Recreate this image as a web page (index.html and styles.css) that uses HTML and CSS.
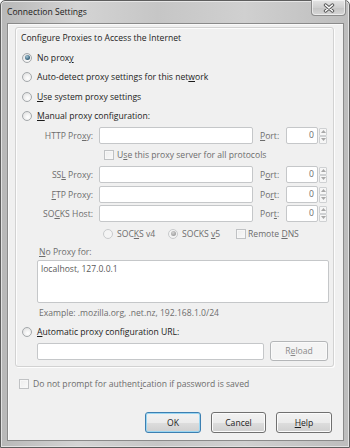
FILE: index.html
```html
<!DOCTYPE html>
<html lang="en">
<head>
<meta charset="utf-8">
<title>Connection Settings</title>
<link rel="stylesheet" href="styles.css">
</head>
<body>
<div class="window">
  <div class="titlebar">
    <span class="title">Connection Settings</span>
    <span class="close"><svg width="12" height="10" viewBox="0 0 12 10"><path d="M2.5 2 L9.5 8 M9.5 2 L2.5 8" stroke="#555" stroke-width="3.4" stroke-linecap="round"/><path d="M2.5 2 L9.5 8 M9.5 2 L2.5 8" stroke="#fff" stroke-width="1.6" stroke-linecap="round"/></svg></span>
  </div>
  <div class="client">
    <div class="group">
      <div class="caption">Configure Proxies to Access the Internet</div>
      <div class="opt h19"><span class="radio checked"></span><span>No prox<u>y</u></span></div>
      <div class="opt h20"><span class="radio"></span><span>Auto-detect proxy settings for this net<u>w</u>ork</span></div>
      <div class="opt h19"><span class="radio"></span><span><u>U</u>se system proxy settings</span></div>
      <div class="opt h19"><span class="radio"></span><span><u>M</u>anual proxy configuration:</span></div>

      <div class="proxy h21">
        <span class="plabel">HTTP Pro<u>x</u>y:</span>
        <span class="field"></span>
        <span class="portlabel"><u>P</u>ort:</span>
        <span class="port">0</span>
        <span class="spin"><span class="sb"><svg width="5" height="3" viewBox="0 0 5 3"><path d="M0 3 L2.5 0 L5 3Z" fill="#a8a8a8"/></svg></span><span class="sb"><svg width="5" height="3" viewBox="0 0 5 3"><path d="M0 0 L2.5 3 L5 0Z" fill="#a8a8a8"/></svg></span></span>
      </div>
      <div class="share h18"><span class="check"></span><span>U<u>s</u>e this proxy server for all protocols</span></div>
      <div class="proxy h21">
        <span class="plabel">SS<u>L</u> Proxy:</span>
        <span class="field"></span>
        <span class="portlabel">P<u>o</u>rt:</span>
        <span class="port">0</span>
        <span class="spin"><span class="sb"><svg width="5" height="3" viewBox="0 0 5 3"><path d="M0 3 L2.5 0 L5 3Z" fill="#a8a8a8"/></svg></span><span class="sb"><svg width="5" height="3" viewBox="0 0 5 3"><path d="M0 0 L2.5 3 L5 0Z" fill="#a8a8a8"/></svg></span></span>
      </div>
      <div class="proxy h19">
        <span class="plabel"><u>F</u>TP Proxy:</span>
        <span class="field"></span>
        <span class="portlabel">Po<u>r</u>t:</span>
        <span class="port">0</span>
        <span class="spin"><span class="sb"><svg width="5" height="3" viewBox="0 0 5 3"><path d="M0 3 L2.5 0 L5 3Z" fill="#a8a8a8"/></svg></span><span class="sb"><svg width="5" height="3" viewBox="0 0 5 3"><path d="M0 0 L2.5 3 L5 0Z" fill="#a8a8a8"/></svg></span></span>
      </div>
      <div class="proxy h19">
        <span class="plabel">SO<u>C</u>KS Host:</span>
        <span class="field"></span>
        <span class="portlabel">Por<u>t</u>:</span>
        <span class="port">0</span>
        <span class="spin"><span class="sb"><svg width="5" height="3" viewBox="0 0 5 3"><path d="M0 3 L2.5 0 L5 3Z" fill="#a8a8a8"/></svg></span><span class="sb"><svg width="5" height="3" viewBox="0 0 5 3"><path d="M0 0 L2.5 3 L5 0Z" fill="#a8a8a8"/></svg></span></span>
      </div>
      <div class="versions h21">
        <span class="ver v4"><span class="radio dis"></span><span>SOC<u>K</u>S v4</span></span>
        <span class="ver v5"><span class="radio dis checked"></span><span>SOCKS <u>v</u>5</span></span>
        <span class="ver dns"><span class="check"></span><span>Remote <u>D</u>NS</span></span>
      </div>
      <div class="noproxy-label h15"><span><u>N</u>o Proxy for:</span></div>
      <div class="noproxy">localhost, 127.0.0.1</div>
      <div class="example h19">Example: .mozilla.org, .net.nz, 192.168.1.0/24</div>
      <div class="opt h19"><span class="radio"></span><span class="dark"><u>A</u>utomatic proxy configuration URL:</span></div>
      <div class="url h20">
        <span class="urlfield"></span>
        <span class="btn reload">R<u>e</u>load</span>
      </div>
    </div>

    <div class="prompt"><span class="check"></span><span>Do not prompt for authent<u>i</u>cation if password is saved</span></div>

    <div class="buttons">
      <span class="btn default">OK</span>
      <span class="btn">Cancel</span>
      <span class="btn"><u>H</u>elp</span>
    </div>
  </div>
</div>
</body>
</html>
```

FILE: styles.css
```css
* { box-sizing: border-box; }
html, body { margin: 0; padding: 0; }
body {
  width: 350px;
  height: 448px;
  overflow: hidden;
  font-family: "Open Sans", "Noto Sans", sans-serif;
  font-size: 8.6px;
  line-height: 12px;
  color: #1c1c1c;
  background: #fff;
}
u { text-decoration: underline; text-underline-offset: 1px; }

.window {
  width: 350px;
  height: 448px;
  display: flex;
  flex-direction: column;
  border: 1px solid #5e5e5e;
  border-radius: 5px 5px 0 0;
  padding: 0 5px 6px 6px;
  background: linear-gradient(to right, #b8b8b8 0%, #d4d4d4 22%, #c6c6c6 45%, #d0d0d0 70%, #bdbdbd 100%);
  box-shadow: inset 1px 0 0 #e2e2e2, inset -1px 0 0 #e2e2e2, inset 0 -1px 0 #e2e2e2, inset 0 1px 0 #e6e6e6;
}

.titlebar {
  height: 22px;
  flex: none;
  display: flex;
  align-items: flex-start;
  position: relative;
}
.title {
  margin-top: 5px;
  margin-left: 0;
  color: #1a1a1a;
  line-height: 12px;
}
.close {
  position: absolute;
  right: -2px;
  top: -1px;
  width: 35px;
  height: 16px;
  border: 1px solid #8c8c8c;
  border-top: none;
  border-radius: 0 0 4px 4px;
  background: linear-gradient(#e4e4e4, #cfcfcf 50%, #c4c4c4 51%, #d6d6d6);
  box-shadow: inset 0 0 0 1px rgba(255,255,255,0.55);
  display: flex;
  align-items: center;
  justify-content: center;
}

.client {
  flex: 1;
  display: flex;
  flex-direction: column;
  border: 1px solid #8a8a8a;
  background: #f0f0f0;
  box-shadow: inset 1px 1px 0 #fafafa;
}

.group {
  margin: 3px 9px 0 7px;
  border: 1px solid #d2d2d2;
  border-radius: 3px;
  box-shadow: inset 1px 1px 0 #fdfdfd, 1px 1px 0 #fdfdfd;
  padding-bottom: 5px;
  display: flex;
  flex-direction: column;
}

.h15 { height: 15px; }
.h18 { height: 18px; }
.h19 { height: 19px; }
.h20 { height: 20px; }
.h21 { height: 21px; }

.caption {
  height: 20px;
  padding-left: 5px;
  display: flex;
  align-items: center;
}

.opt {
  display: flex;
  align-items: center;
  padding-left: 6px;
}
.dark { color: #1c1c1c; }

.radio {
  flex: none;
  width: 10px;
  height: 10px;
  margin-right: 5px;
  border-radius: 50%;
  border: 1px solid #a4a8ab;
  background: radial-gradient(circle at 60% 65%, #ffffff 0%, #f0f0f0 45%, #d8d8d8 100%);
  position: relative;
}
.radio.checked::after {
  content: "";
  position: absolute;
  left: 1.5px;
  top: 1.5px;
  width: 5px;
  height: 5px;
  border-radius: 50%;
  background: radial-gradient(circle at 40% 35%, #a8c8d8 0%, #3f6a82 60%, #2a4a5e 100%);
}
.radio.dis {
  border-color: #c8cacc;
  background: #f4f4f4;
}
.radio.dis.checked::after {
  background: radial-gradient(circle at 40% 35%, #d4d4d4 0%, #a0a0a0 70%);
}

.check {
  flex: none;
  width: 10px;
  height: 10px;
  border: 1px solid #c0c2c4;
  background: linear-gradient(135deg, #ececec, #fafafa);
  box-shadow: inset 0 0 0 1px #f7f7f7;
}

.proxy {
  display: flex;
  align-items: center;
  color: #6d6d6d;
}
.plabel {
  width: 77px;
  text-align: right;
}
.field {
  margin-left: 6px;
  width: 154px;
  height: 17px;
  border: 1px solid #c5c7c9;
  border-radius: 2px;
  background: #fff;
}
.portlabel {
  margin-left: 7px;
  width: 26px;
}
.port {
  width: 32px;
  height: 17px;
  border: 1px solid #c5c7c9;
  border-radius: 2px;
  background: #fff;
  text-align: right;
  padding-right: 3px;
  line-height: 15px;
}
.spin {
  margin-left: 1px;
  width: 8px;
  height: 16px;
  display: flex;
  flex-direction: column;
}
.sb {
  flex: 1;
  border: 1px solid #cfd1d3;
  border-radius: 1px;
  background: #f6f6f6;
  display: flex;
  align-items: center;
  justify-content: center;
}

.share {
  display: flex;
  align-items: center;
  padding-left: 88px;
  color: #6d6d6d;
}
.share .check { margin-right: 3px; }

.versions {
  display: flex;
  align-items: center;
  padding-left: 87px;
  color: #6d6d6d;
}
.ver { display: flex; align-items: center; }
.ver .radio { margin-right: 4px; }
.v4 { width: 65px; }
.v5 { width: 68px; }
.dns .check { margin-right: 2px; }

.noproxy-label {
  display: flex;
  align-items: center;
  padding-left: 23px;
  color: #6d6d6d;
}
.noproxy {
  margin: 1px 0 0 21px;
  width: 292px;
  height: 43px;
  border: 1px solid #c5c7c9;
  border-radius: 2px;
  background: #fff;
  padding: 2px 3px;
  color: #5a5a5a;
}
.example {
  display: flex;
  align-items: center;
  padding-left: 23px;
  color: #6d6d6d;
}

.url {
  display: flex;
  align-items: center;
  padding-left: 21px;
}
.urlfield {
  width: 227px;
  height: 17px;
  border: 1px solid #c5c7c9;
  border-radius: 2px;
  background: #fff;
}

.btn {
  display: flex;
  align-items: center;
  justify-content: center;
  width: 56px;
  height: 21px;
  border: 1px solid #707070;
  border-radius: 3px;
  background: linear-gradient(#f2f2f2 0%, #ebebeb 50%, #dddddd 51%, #cfcfcf 100%);
  box-shadow: inset 0 0 0 1px #fbfbfb;
  color: #1c1c1c;
}
.btn.reload {
  margin-left: 6px;
  width: 58px;
  height: 20px;
  border-color: #b4b6b8;
  background: #f4f4f4;
  color: #8a8a8a;
  box-shadow: inset 0 0 0 1px #fafafa;
}
.btn.default {
  border-color: #3c7fb1;
  box-shadow: inset 0 0 0 1px #9ad6f2;
  background: linear-gradient(#f2f2f2 0%, #ebebeb 50%, #dddddd 51%, #cfcfcf 100%);
}

.prompt {
  margin-top: 8px;
  height: 18px;
  display: flex;
  align-items: center;
  padding-left: 11px;
  color: #6d6d6d;
}
.prompt .check { margin-right: 4px; }

.buttons {
  margin-top: 19px;
  display: flex;
  justify-content: flex-end;
  gap: 10px;
  padding-right: 11px;
}
.buttons .btn:nth-child(2) { width: 55px; }
```
